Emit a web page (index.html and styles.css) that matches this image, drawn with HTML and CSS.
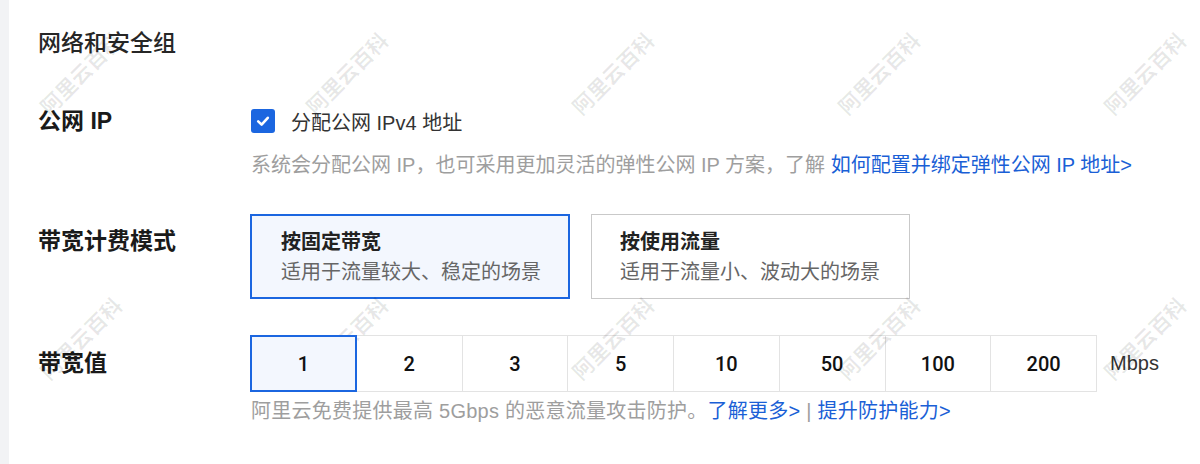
FILE: index.html
```html
<!DOCTYPE html>
<html>
<head>
    <meta charset="UTF-8">
    <meta name="viewport" content="width=device-width, initial-scale=1.0">
    <title>网络和安全组</title>
    <link rel="stylesheet" href="styles.css">
</head>
<body>
    <div id="page">
        <div class="side_bar"></div>

        <div id="main_box">
            <h2 class="section_title">网络和安全组</h2>

            <!--公网IP-->
            <div class="form_row row_ip">
                <div class="form_label">公网 IP</div>
                <div class="form_ctrl">
                    <label class="check_line">
                        <span class="check_box">
                            <svg width="16" height="16" viewBox="0 0 16 16"><path d="M3.2 8.4 L6.6 11.6 L12.8 4.8" fill="none" stroke="#fff" stroke-width="2.6" stroke-linecap="round" stroke-linejoin="round"/></svg>
                        </span>
                        <span>分配公网 IPv4 地址</span>
                    </label>
                    <p class="help_text">系统会分配公网 IP，也可采用更加灵活的弹性公网 IP 方案，了解 <a href="#">如何配置并绑定弹性公网 IP 地址&gt;</a></p>
                </div>
            </div>

            <!--带宽计费模式-->
            <div class="form_row row_mode">
                <div class="form_label">带宽计费模式</div>
                <div class="form_ctrl mode_cards">
                    <div class="mode_card active">
                        <div class="card_title">按固定带宽</div>
                        <div class="card_desc">适用于流量较大、稳定的场景</div>
                    </div>
                    <div class="mode_card">
                        <div class="card_title">按使用流量</div>
                        <div class="card_desc">适用于流量小、波动大的场景</div>
                    </div>
                </div>
            </div>

            <!--带宽值-->
            <div class="form_row row_value">
                <div class="form_label">带宽值</div>
                <div class="form_ctrl">
                    <div class="bw_line">
                        <div class="bw_group">
                            <span class="bw_item active">1</span>
                            <span class="bw_item">2</span>
                            <span class="bw_item">3</span>
                            <span class="bw_item">5</span>
                            <span class="bw_item">10</span>
                            <span class="bw_item">50</span>
                            <span class="bw_item">100</span>
                            <span class="bw_item">200</span>
                        </div>
                        <span class="bw_unit">Mbps</span>
                    </div>
                    <p class="bw_note">阿里云免费提供最高 5Gbps 的恶意流量攻击防护。<a href="#">了解更多&gt;</a> <span class="sep">|</span> <a href="#">提升防护能力&gt;</a></p>
                </div>
            </div>
        </div>

        <!--水印-->
        <div class="wm_layer">
            <span>阿里云百科</span><span>阿里云百科</span><span>阿里云百科</span><span>阿里云百科</span><span>阿里云百科</span>
            <span>阿里云百科</span><span>阿里云百科</span><span>阿里云百科</span><span>阿里云百科</span><span>阿里云百科</span>
        </div>
    </div>
</body>
</html>
```

FILE: styles.css
```css
/*全局样式*/
* {padding:0px;margin:0px;box-sizing:border-box;}
html,body {width:100%;height:100%;overflow:hidden;background:#fff;}
body {font-family:"Liberation Sans","Noto Sans CJK SC",sans-serif;color:#333;}
a {color:#1a5fd6;text-decoration:none;}

#page {position:relative;display:flex;height:100%;overflow:hidden;}
.side_bar {width:9px;flex-shrink:0;background:#f2f3f5;}
#main_box {flex:1;padding:27px 0 0 29px;}

/*标题*/
.section_title {font-size:23px;line-height:32px;font-weight:500;color:#262626;}

/*表单行*/
.form_row {display:flex;}
.form_label {width:212px;flex-shrink:0;font-size:23px;line-height:32px;font-weight:600;color:#1a1a1a;}
.form_ctrl {flex:1;}

/*公网IP*/
.row_ip {margin-top:46px;}
.check_line {display:flex;align-items:center;height:32px;font-size:20px;color:#333;}
.check_box {width:24px;height:24px;margin:0 16px 0 1px;border-radius:3px;background:#1b66e0;display:flex;align-items:center;justify-content:center;}
.help_text {margin-top:12px;padding-left:1px;font-size:20px;line-height:32px;color:#9e9e9e;white-space:nowrap;}

/*带宽计费模式*/
.row_mode {margin-top:33px;}
.row_mode .form_label {margin-top:11px;}
.mode_cards {display:flex;gap:21px;}
.mode_card {width:319px;height:85px;border:1px solid #c9c9c9;padding:12px 0 0 28px;}
.mode_card.active {width:320px;border:2px solid #1b66e0;background:#f3f7fe;padding:11px 0 0 29px;}
.card_title {font-size:20px;line-height:30px;font-weight:600;color:#222;}
.card_desc {font-size:20px;line-height:30px;color:#666;}

/*带宽值*/
.row_value {margin-top:36px;}
.row_value .form_label {line-height:57px;}
.bw_line {display:flex;align-items:center;}
.bw_group {display:flex;}
.bw_item {width:106.75px;height:57px;margin-left:-1px;border:1px solid #e3e3e3;display:flex;align-items:center;justify-content:center;font-family:Roboto,"Liberation Sans",sans-serif;font-size:20px;font-weight:500;color:#111;}
.bw_item:first-child {margin-left:0;}
.bw_item.active {position:relative;z-index:1;border:2px solid #1b66e0;background:#f3f7fe;}
.bw_unit {margin-left:13px;font-size:20px;color:#333;}
.bw_note {margin-top:3px;padding-left:1px;font-size:20px;line-height:32px;color:#9e9e9e;white-space:nowrap;letter-spacing:0.25px;}
.bw_note .sep {color:#9e9e9e;}

/*水印*/
.wm_layer {position:absolute;left:-53px;top:-60px;display:grid;grid-template-columns:repeat(5,266px);grid-template-rows:repeat(2,265px);pointer-events:none;}
.wm_layer span {display:flex;align-items:center;justify-content:center;font-family:"Noto Sans CJK SC",sans-serif;font-size:21px;font-weight:700;color:rgba(0,0,0,0.09);transform:rotate(-45deg);white-space:nowrap;}
```
